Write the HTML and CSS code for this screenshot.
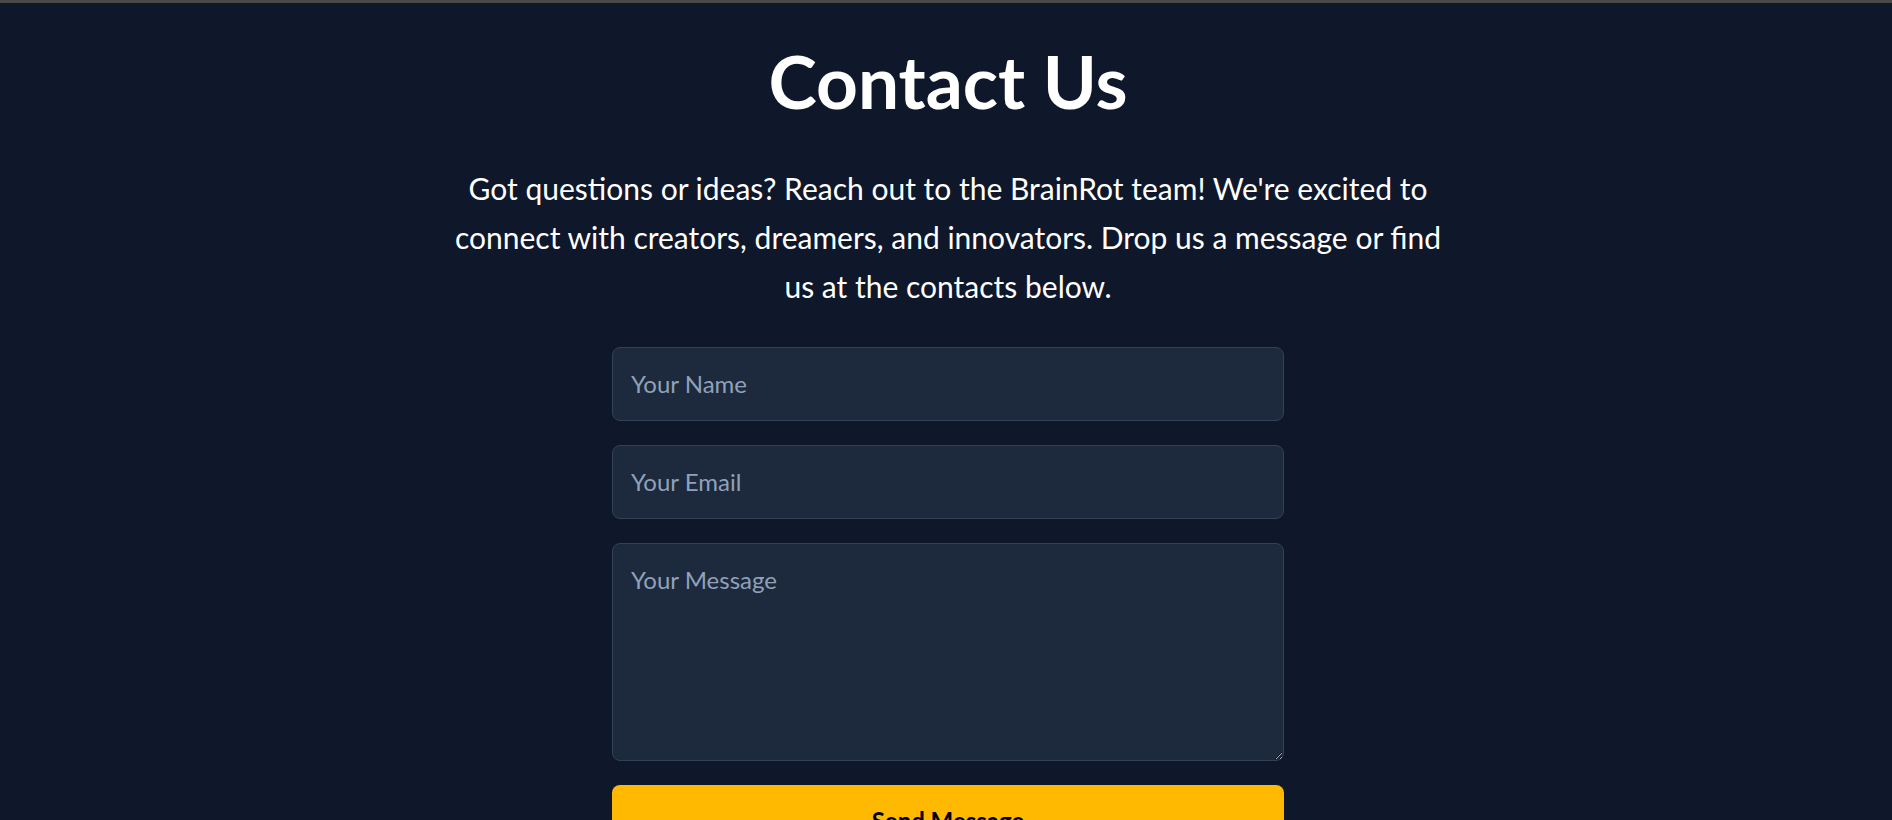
FILE: index.html
```html
<!DOCTYPE html>
<html lang="en">
<head>
<meta charset="utf-8">
<title>Contact Us</title>
<link rel="stylesheet" href="styles.css">
</head>
<body>
<main class="contact">
  <h1 class="contact-title">Contact Us</h1>
  <p class="contact-intro">Got questions or ideas? Reach out to the BrainRot team! We're excited to connect with creators, dreamers, and innovators. Drop us a message or find us at the contacts below.</p>
  <form class="contact-form">
    <input class="field" type="text" placeholder="Your Name">
    <input class="field" type="email" placeholder="Your Email">
    <textarea class="field field-message" placeholder="Your Message"></textarea>
    <button class="send-btn" type="button">Send Message</button>
  </form>
</main>
</body>
</html>
```

FILE: styles.css
```css
html, body {
  margin: 0;
  padding: 0;
}
body {
  background: #0f172b;
  border-top: 3px solid #4a4a4a;
  font-family: "Lato", "Liberation Sans", sans-serif;
  color: #ffffff;
  min-height: 100vh;
  box-sizing: border-box;
}
.contact {
  display: flex;
  flex-direction: column;
  align-items: center;
  padding-top: 42px;
  padding-left: 4px;
}
.contact-title {
  margin: 0;
  font-size: 73px;
  line-height: 1;
  font-weight: 700;
}
.contact-intro {
  margin: 46px 0 0;
  max-width: 1000px;
  font-size: 30px;
  line-height: 49px;
  text-align: center;
}
.contact-form {
  margin-top: 36px;
  width: 672px;
  display: flex;
  flex-direction: column;
  gap: 24px;
}
.field {
  display: block;
  box-sizing: border-box;
  width: 100%;
  margin: 0;
  padding: 16px 16px 16px 18px;
  border: 1px solid #314158;
  border-radius: 8px;
  background: #1d293d;
  color: #ffffff;
  font-family: inherit;
  font-size: 24px;
  line-height: 40px;
  outline: none;
}
.field::placeholder {
  color: #90a1b9;
}
.field-message {
  height: 218px;
  resize: vertical;
}
.send-btn {
  display: block;
  width: 100%;
  padding: 16px;
  border: 0;
  border-radius: 8px;
  background: #ffb900;
  color: #000000;
  font-family: inherit;
  font-size: 24px;
  line-height: 40px;
  font-weight: 700;
  cursor: pointer;
}
```
